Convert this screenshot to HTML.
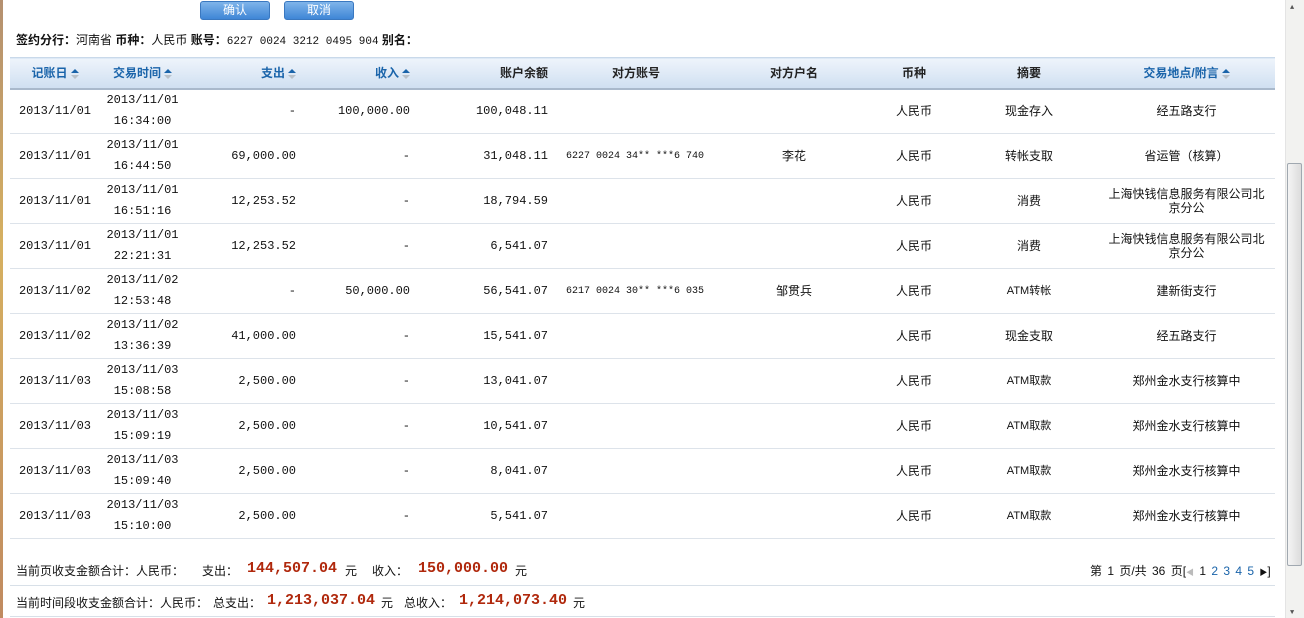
<!DOCTYPE html>
<html><head><meta charset="utf-8">
<style>
*{margin:0;padding:0;box-sizing:border-box}
body{width:1304px;height:618px;overflow:hidden;background:#fff;position:relative;font-family:"Liberation Mono","Noto Sans CJK SC",monospace;font-size:12px;color:#111}
.btn{position:absolute;top:1px;height:19px;width:70px;border-radius:3px;background:linear-gradient(#7fb4ea,#3f86d6);border:1px solid #3a78c0;color:#fff;text-align:center;font-size:12px;line-height:17px;font-family:"Liberation Sans","Noto Sans CJK SC",sans-serif}
.info{position:absolute;left:16px;top:31px;font-size:12px;font-family:"Liberation Sans","Noto Sans CJK SC",sans-serif}
table{position:absolute;left:10px;top:57px;border-collapse:collapse;table-layout:fixed;width:1265px}
th{height:31px;background:linear-gradient(#eef4fb,#cfdff1);border-top:1px solid #c9d9ea;border-bottom:2px solid #a9b9cc;font-family:"Liberation Sans","Noto Sans CJK SC",sans-serif;font-size:12px;font-weight:bold;color:#222}
th.s{color:#1a64aa}
td{height:45px;border-bottom:1px solid #dde3ea;text-align:center;line-height:21px;font-size:12px}
td.r{text-align:right;padding-right:4px}
td.l{text-align:left;padding-left:14px;font-size:10px}
td.c{font-family:"Liberation Sans","Noto Sans CJK SC",sans-serif}
td.a{font-family:"Liberation Sans","Noto Sans CJK SC",sans-serif;font-size:12px;line-height:14px}
.ar{display:inline-block;width:8px;height:10px;vertical-align:middle;position:relative;margin-left:3px}
.ar:before{content:"";position:absolute;left:0;top:0;border:4px solid transparent;border-bottom:4px solid #1a64aa;border-top:0}
.ar:after{content:"";position:absolute;left:0;top:6px;border:4px solid transparent;border-top:4px solid #b8c0c8;border-bottom:0}
.t{position:absolute;font-family:"Liberation Sans","Noto Sans CJK SC",sans-serif;font-size:12px;white-space:nowrap}
.red{position:absolute;color:#b0280c;font-weight:bold;font-family:"Liberation Mono",monospace;font-size:15px;white-space:nowrap}
.line{position:absolute;left:10px;width:1265px;height:1px;background:#d8e0e8}
.sb{position:absolute;left:1285px;top:0;width:19px;height:618px;background:#f2f2f0;border-left:1px solid #e4e4e4}
.thumb{position:absolute;left:1287px;top:163px;width:15px;height:403px;border:1px solid #a0a8b0;border-radius:2px;background:linear-gradient(90deg,#f4f4f4,#dcdcdc)}
</style></head><body>
<div style="position:absolute;left:0;top:0;width:3px;height:618px;background:linear-gradient(#b49070,#d6b060 40%,#c08a60)"></div>
<div class="btn" style="left:200px">确认</div>
<div class="btn" style="left:284px">取消</div>
<div class="info"><b>签约分行：</b>河南省 <b>币种：</b>人民币 <b>账号：</b><span style="font-family:'Liberation Mono',monospace;font-size:11px">6227 0024 3212 0495 904</span> <b>别名：</b></div>
<table>
<colgroup><col style="width:90px"><col style="width:85px"><col style="width:115px"><col style="width:114px"><col style="width:138px"><col style="width:168px"><col style="width:148px"><col style="width:92px"><col style="width:138px"><col style="width:177px"></colgroup>
<tr><th class="s">记账日<span class="ar"></span></th><th class="s">交易时间<span class="ar"></span></th><th class="s" style="text-align:right;padding-right:4px">支出<span class="ar"></span></th><th class="s" style="text-align:right;padding-right:4px">收入<span class="ar"></span></th><th style="text-align:right;padding-right:4px">账户余额</th><th style="text-align:left;padding-left:60px">对方账号</th><th>对方户名</th><th>币种</th><th>摘要</th><th class="s">交易地点/附言<span class="ar"></span></th></tr>
<tr><td>2013/11/01</td><td>2013/11/01<br>16:34:00</td><td class="r">-</td><td class="r">100,000.00</td><td class="r">100,048.11</td><td class="l"></td><td class="c"></td><td class="c">人民币</td><td class="c">现金存入</td><td class="c">经五路支行</td></tr>
<tr><td>2013/11/01</td><td>2013/11/01<br>16:44:50</td><td class="r">69,000.00</td><td class="r">-</td><td class="r">31,048.11</td><td class="l">6227 0024 34** ***6 740</td><td class="c">李花</td><td class="c">人民币</td><td class="c">转帐支取</td><td class="c">省运管（核算）</td></tr>
<tr><td>2013/11/01</td><td>2013/11/01<br>16:51:16</td><td class="r">12,253.52</td><td class="r">-</td><td class="r">18,794.59</td><td class="l"></td><td class="c"></td><td class="c">人民币</td><td class="c">消费</td><td class="a">上海快钱信息服务有限公司北<br>京分公</td></tr>
<tr><td>2013/11/01</td><td>2013/11/01<br>22:21:31</td><td class="r">12,253.52</td><td class="r">-</td><td class="r">6,541.07</td><td class="l"></td><td class="c"></td><td class="c">人民币</td><td class="c">消费</td><td class="a">上海快钱信息服务有限公司北<br>京分公</td></tr>
<tr><td>2013/11/02</td><td>2013/11/02<br>12:53:48</td><td class="r">-</td><td class="r">50,000.00</td><td class="r">56,541.07</td><td class="l">6217 0024 30** ***6 035</td><td class="c">邹贯兵</td><td class="c">人民币</td><td class="c" style="font-size:11px">ATM转帐</td><td class="c">建新街支行</td></tr>
<tr><td>2013/11/02</td><td>2013/11/02<br>13:36:39</td><td class="r">41,000.00</td><td class="r">-</td><td class="r">15,541.07</td><td class="l"></td><td class="c"></td><td class="c">人民币</td><td class="c">现金支取</td><td class="c">经五路支行</td></tr>
<tr><td>2013/11/03</td><td>2013/11/03<br>15:08:58</td><td class="r">2,500.00</td><td class="r">-</td><td class="r">13,041.07</td><td class="l"></td><td class="c"></td><td class="c">人民币</td><td class="c" style="font-size:11px">ATM取款</td><td class="c">郑州金水支行核算中</td></tr>
<tr><td>2013/11/03</td><td>2013/11/03<br>15:09:19</td><td class="r">2,500.00</td><td class="r">-</td><td class="r">10,541.07</td><td class="l"></td><td class="c"></td><td class="c">人民币</td><td class="c" style="font-size:11px">ATM取款</td><td class="c">郑州金水支行核算中</td></tr>
<tr><td>2013/11/03</td><td>2013/11/03<br>15:09:40</td><td class="r">2,500.00</td><td class="r">-</td><td class="r">8,041.07</td><td class="l"></td><td class="c"></td><td class="c">人民币</td><td class="c" style="font-size:11px">ATM取款</td><td class="c">郑州金水支行核算中</td></tr>
<tr><td>2013/11/03</td><td>2013/11/03<br>15:10:00</td><td class="r">2,500.00</td><td class="r">-</td><td class="r">5,541.07</td><td class="l"></td><td class="c"></td><td class="c">人民币</td><td class="c" style="font-size:11px">ATM取款</td><td class="c">郑州金水支行核算中</td></tr>
</table>
<div class="t" style="left:16px;top:562px">当前页收支金额合计：人民币：</div>
<div class="t" style="left:202px;top:562px">支出：</div>
<div class="red" style="left:247px;top:560px">144,507.04</div>
<div class="t" style="left:345px;top:562px">元</div>
<div class="t" style="left:372px;top:562px">收入：</div>
<div class="red" style="left:418px;top:560px">150,000.00</div>
<div class="t" style="left:515px;top:562px">元</div>
<div class="t" style="left:1090px;top:562px;word-spacing:2px">第 1 页/共 36 页[<span style="color:#bbb;font-size:8px">◀</span> 1 <span style="color:#1a64aa">2 3 4 5</span> <span style="font-size:8px">▶</span>]</div>
<div class="line" style="top:585px"></div>
<div class="t" style="left:16px;top:594px">当前时间段收支金额合计：人民币：</div>
<div class="t" style="left:213px;top:594px">总支出：</div>
<div class="red" style="left:267px;top:592px">1,213,037.04</div>
<div class="t" style="left:381px;top:594px">元</div>
<div class="t" style="left:404px;top:594px">总收入：</div>
<div class="red" style="left:459px;top:592px">1,214,073.40</div>
<div class="t" style="left:573px;top:594px">元</div>
<div class="line" style="top:616px"></div>
<div class="sb"></div>
<div style="position:absolute;left:1290px;top:4px;font-size:7px;color:#555">▲</div>
<div class="thumb"></div>
<div style="position:absolute;left:1290px;top:609px;font-size:7px;color:#555">▼</div>
</body></html>
